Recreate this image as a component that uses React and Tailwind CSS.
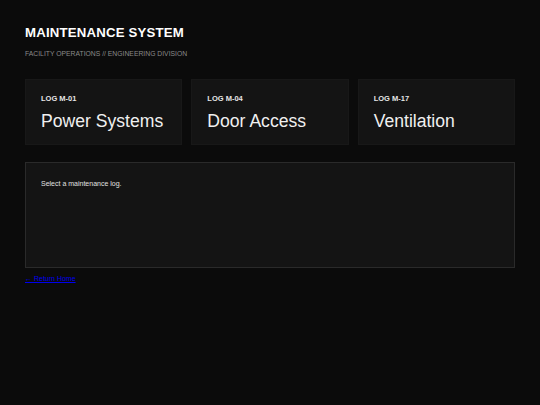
import React from 'react';

const logs = [
  { id: 'LOG M-01', title: 'Power Systems' },
  { id: 'LOG M-04', title: 'Door Access' },
  { id: 'LOG M-17', title: 'Ventilation' },
];

const App = () => {
  return (
    <div className="min-h-[405px] bg-[#0b0b0b] px-[25px] pt-[25px] pb-6 text-white" style={{ fontFamily: '"Liberation Sans", Arial, sans-serif' }}>
      <div className="w-[490px]">
        <h1 className="text-[13.2px] font-bold leading-[16px] tracking-[0.2px]">MAINTENANCE SYSTEM</h1>
        <p className="mt-[8px] text-[6.8px] leading-[9px] text-[#8a8a8a]">FACILITY OPERATIONS // ENGINEERING DIVISION</p>

        <div className="mt-[21px] grid grid-cols-3 gap-[9px]">
          {logs.map((log) => (
            <button
              key={log.id}
              className="h-[66px] bg-[#141414] border border-[#181818] px-[15px] pt-[14px] text-left flex flex-col items-start"
            >
              <div className="text-[7.5px] font-bold leading-[9px] text-[#e6e6e6]">{log.id}</div>
              <div className="mt-[8px] text-[17.6px] leading-[21px] text-[#f0f0f0]">{log.title}</div>
            </button>
          ))}
        </div>

        <div className="mt-[17px] h-[106px] border border-[#2a2a2a] bg-[#141414] px-[15px] pt-[16px]">
          <p className="text-[7px] leading-[9px] text-[#e0e0e0]">Select a maintenance log.</p>
        </div>

        <a href="#" className="mt-[6px] block w-fit text-[7px] leading-[9px] text-[#0000ee] underline">← Return Home</a>
      </div>
    </div>
  );
};

export default App;
